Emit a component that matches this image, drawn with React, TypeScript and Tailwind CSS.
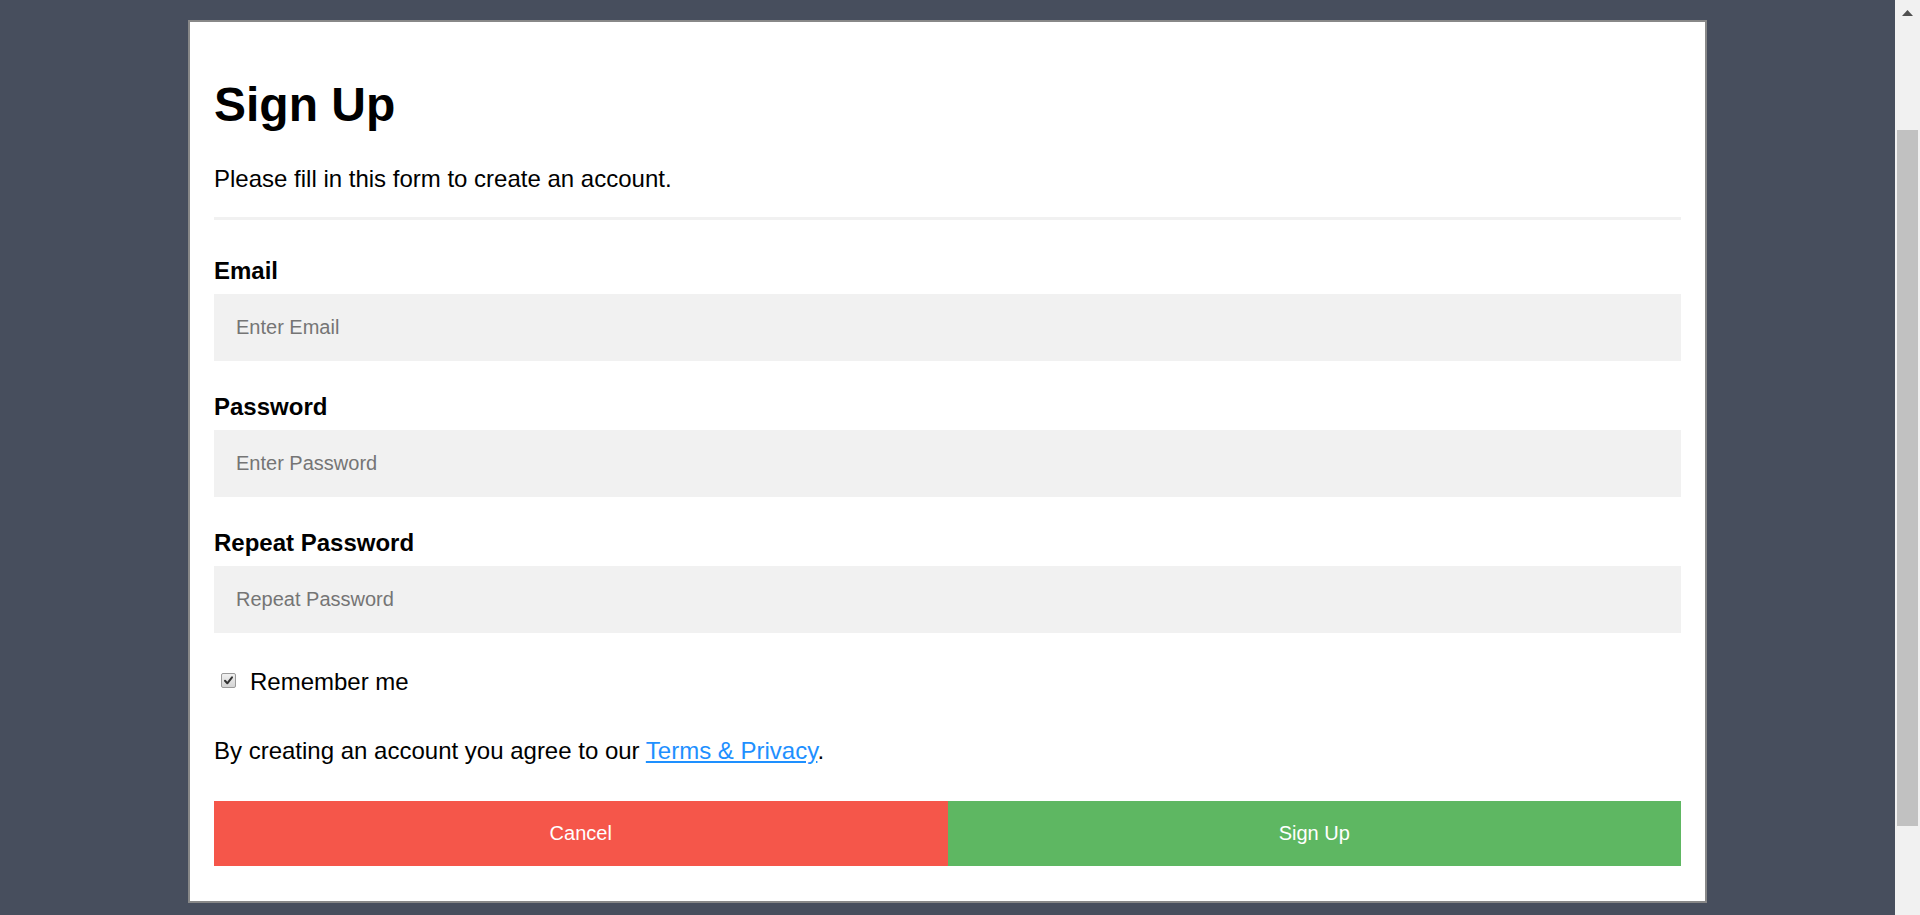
import React from "react";

const font = { fontFamily: '"Liberation Sans", Arial, Helvetica, sans-serif' };

function Field({ label, placeholder, type, first }: { label: string; placeholder: string; type: string; first?: boolean }) {
  return (
    <>
      <label className={`${first ? "mt-[35px]" : "mt-[30px]"} block text-[24px] leading-[32px] font-bold text-black`}>{label}</label>
      <input
        type={type}
        placeholder={placeholder}
        readOnly
        className="mt-[7px] block h-[67px] w-full bg-[#f1f1f1] px-[22px] text-[20px] text-black outline-none placeholder:text-[#757575]"
      />
    </>
  );
}

export default function App() {
  return (
    <div className="flex h-[915px] w-full overflow-hidden" style={font}>
      <div className="flex-1 bg-[#474e5d]">
        <div className="mx-auto mt-[20px] w-[1519px] border-2 border-[#888888] bg-white px-[24px] pb-[35px]">
          <h1 className="mt-[55px] text-[48px] leading-[56px] font-bold text-black">Sign Up</h1>
          <p className="mt-[30px] text-[24px] leading-[32px] text-black">Please fill in this form to create an account.</p>
          <div className="mt-[22px] h-[3px] bg-[#f1f1f1]" />

          <Field first label="Email" placeholder="Enter Email" type="text" />
          <Field label="Password" placeholder="Enter Password" type="password" />
          <Field label="Repeat Password" placeholder="Repeat Password" type="password" />

          <div className="mt-[33px] flex h-[32px] items-center">
            <div className="ml-[7px] mb-[3px] flex h-[15px] w-[15px] items-center justify-center rounded-[2px] border border-[#9a9a9a] bg-gradient-to-b from-[#f0f0f0] to-[#d4d4d4]">
              <svg width="11" height="11" viewBox="0 0 11 11">
                <path d="M2 5.8 L4.3 8.3 L9 2.3" fill="none" stroke="#333" strokeWidth="2" strokeLinecap="round" strokeLinejoin="round" />
              </svg>
            </div>
            <span className="ml-[14px] text-[24px] leading-[32px] text-black">Remember me</span>
          </div>

          <p className="mt-[37px] text-[24px] leading-[32px] text-black">
            By creating an account you agree to our{" "}
            <a href="#" className="text-[#1e90ff] underline">Terms &amp; Privacy</a>.
          </p>

          <div className="mt-[34px] flex h-[65px]">
            <button className="flex-1 bg-[#f5564a] pb-[2px] text-[20px] text-white">Cancel</button>
            <button className="flex-1 bg-[#5eb762] pb-[2px] text-[20px] text-white">Sign Up</button>
          </div>
        </div>
      </div>
      <div className="flex w-[25px] flex-col bg-[#f1f1f1]">
        <div className="flex h-[130px] justify-center pt-[10px]">
          <svg width="11" height="6" viewBox="0 0 11 6">
            <path d="M0 6 L5.5 0 L11 6 Z" fill="#505050" />
          </svg>
        </div>
        <div className="mx-[2px] h-[696px] bg-[#c1c1c1]" />
      </div>
    </div>
  );
}
